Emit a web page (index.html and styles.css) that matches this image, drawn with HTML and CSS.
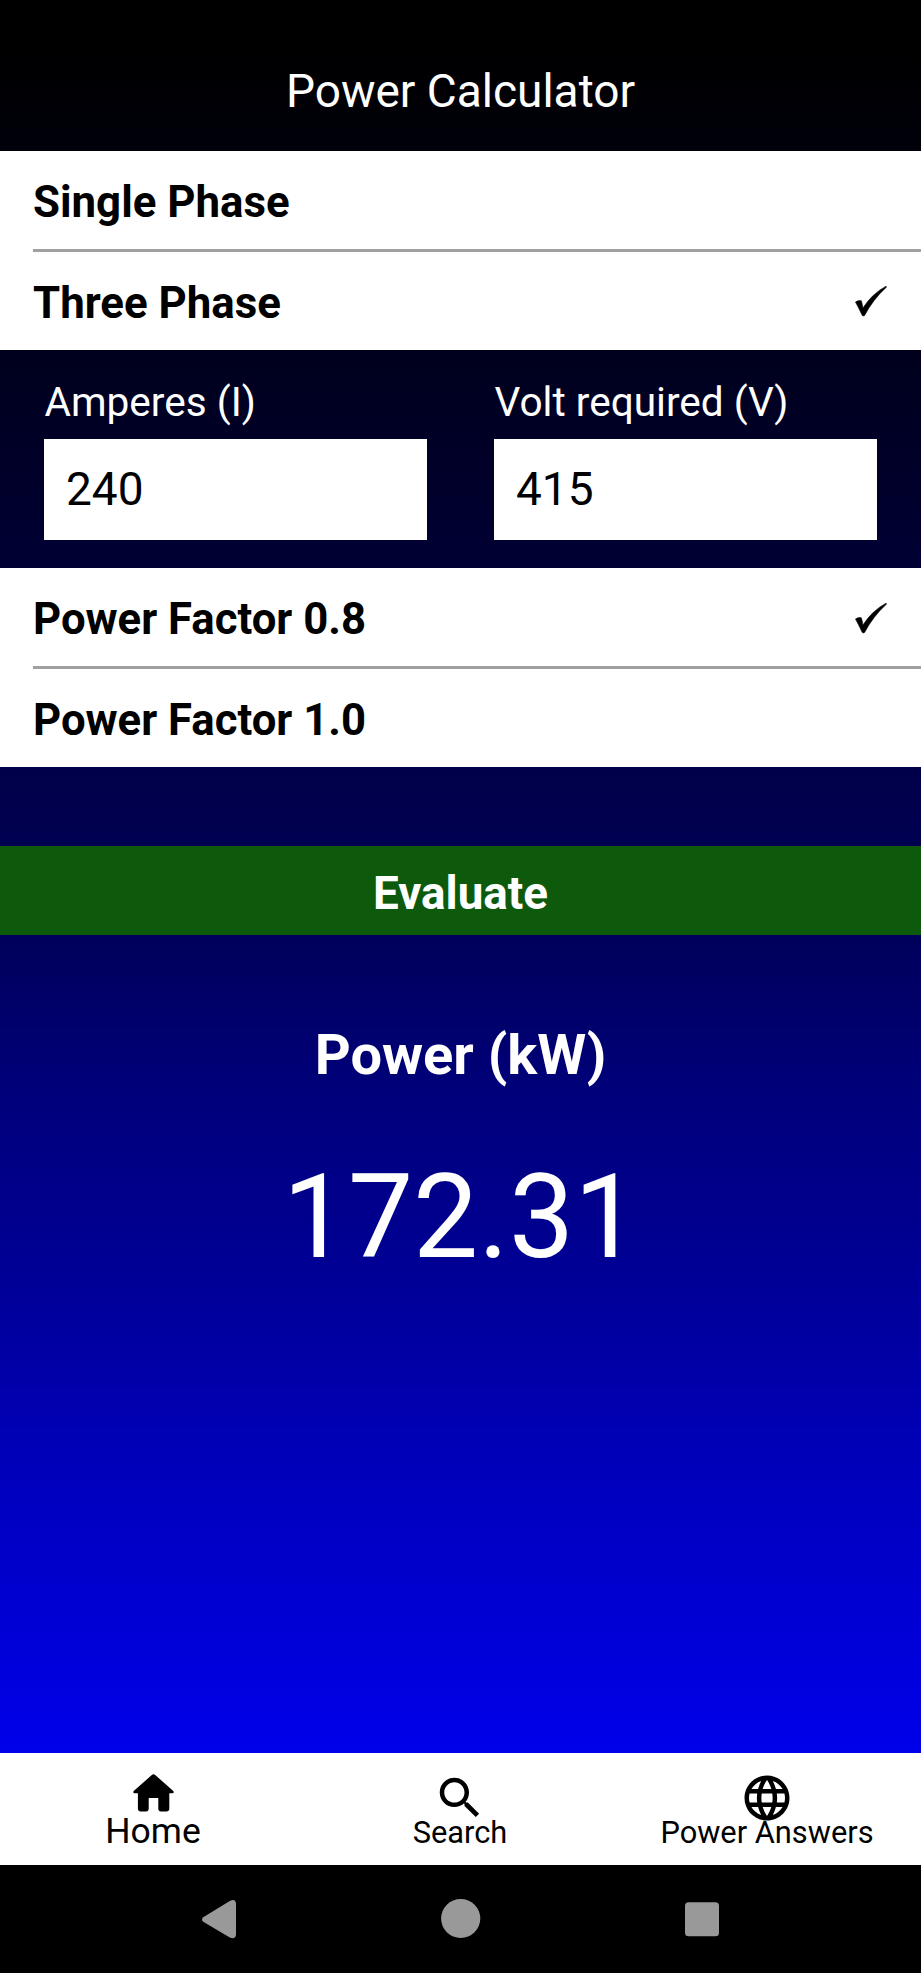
FILE: index.html
```
<!DOCTYPE html>
<html lang="en">
<head>
<meta charset="utf-8">
<title>Power Calculator</title>
<link rel="stylesheet" href="styles.css">
</head>
<body>
<div class="app">
  <header class="header"><h1 class="title">Power Calculator</h1></header>
  <main class="content">
    <ul class="options">
      <li class="option"><span class="option-label">Single Phase</span></li>
      <li class="option"><span class="option-label">Three Phase</span>
        <svg class="check" viewBox="0 0 32 32"><path d="M0 16.5Q3 14.5 6 15.2Q7 18 7.6 22.8Q17 8 31.5 0.2Q32.2 0.5 31.8 1.3Q18 14 9.4 30.4Q8.3 31.3 7 30.5Q4 24 0 16.5Z"/></svg></li>
    </ul>
    <section class="fields">
      <label class="field"><span class="field-label">Amperes (I)</span><input class="field-input" type="text" value="240"></label>
      <label class="field"><span class="field-label">Volt required (V)</span><input class="field-input" type="text" value="415"></label>
    </section>
    <ul class="options">
      <li class="option"><span class="option-label factor">Power Factor 0.8</span>
        <svg class="check" viewBox="0 0 32 32"><path d="M0 16.5Q3 14.5 6 15.2Q7 18 7.6 22.8Q17 8 31.5 0.2Q32.2 0.5 31.8 1.3Q18 14 9.4 30.4Q8.3 31.3 7 30.5Q4 24 0 16.5Z"/></svg></li>
      <li class="option"><span class="option-label factor">Power Factor 1.0</span></li>
    </ul>
    <button class="evaluate" type="button"><span>Evaluate</span></button>
    <section class="result">
      <h2 class="result-title">Power (kW)</h2>
      <p class="result-value">172.31</p>
    </section>
  </main>
  <nav class="tabs">
    <a class="tab tab-home"><svg class="icon-home" viewBox="0 0 41 38"><path d="M18.8 1Q20.5-.5 22.2 1L40.3 17Q41.4 18.9 39.5 19.3H36.3V34.6Q36.3 37.5 33.4 37.5H28Q25.3 37.5 25.3 34.6V24H15.7V34.6Q15.7 37.5 13 37.5H7.8Q4.9 37.5 4.9 34.6V19.3H1.5Q-.4 18.9.7 17Z"/></svg><span>Home</span></a>
    <a class="tab"><svg class="icon" viewBox="0 0 24 24"><path d="M15.5 14h-.79l-.28-.27C15.41 12.59 16 11.11 16 9.5 16 5.91 13.09 3 9.5 3S3 5.91 3 9.5 5.91 16 9.5 16c1.61 0 3.09-.59 4.23-1.57l.27.28v.79l5 4.99L20.49 19l-4.99-5zm-6 0C7.01 14 5 11.99 5 9.5S7.01 5 9.5 5 14 7.01 14 9.5 11.99 14 9.5 14z"/></svg><span>Search</span></a>
    <a class="tab"><svg class="icon" viewBox="0 0 24 24"><path d="M11.99 2C6.47 2 2 6.48 2 12s4.47 10 9.99 10C17.52 22 22 17.52 22 12S17.52 2 11.99 2zm6.93 6h-2.95c-.32-1.25-.78-2.45-1.38-3.56 1.84.63 3.37 1.91 4.33 3.56zM12 4.04c.83 1.2 1.48 2.53 1.91 3.96h-3.82c.43-1.43 1.08-2.76 1.91-3.96zM4.26 14C4.1 13.36 4 12.69 4 12s.1-1.36.26-2h3.38c-.08.66-.14 1.32-.14 2s.06 1.34.14 2H4.26zm.82 2h2.95c.32 1.25.78 2.45 1.38 3.56-1.84-.63-3.37-1.9-4.33-3.56zm2.95-8H5.08c.96-1.66 2.49-2.93 4.33-3.56C8.81 5.55 8.35 6.75 8.03 8zM12 19.96c-.83-1.2-1.48-2.53-1.91-3.96h3.82c-.43 1.43-1.08 2.76-1.91 3.96zM14.34 14H9.66c-.09-.66-.16-1.32-.16-2s.07-1.35.16-2h4.68c.09.65.16 1.32.16 2s-.07 1.34-.16 2zm.25 5.56c.6-1.11 1.06-2.31 1.38-3.56h2.95c-.96 1.65-2.49 2.93-4.33 3.56zM16.36 14c.08-.66.14-1.32.14-2s-.06-1.34-.14-2h3.38c.16.64.26 1.31.26 2s-.1 1.36-.26 2h-3.38z"/></svg><span>Power Answers</span></a>
  </nav>
  <footer class="system-bar">
    <svg class="sys" viewBox="0 0 40 40"><path d="M2.2 18.2 29.2 1.7Q34.4-.3 35 4.5V36Q34.4 40.3 29.2 38.7L2.2 22.8Q-.2 20.5 2.2 18.2Z"/></svg>
    <svg class="sys" viewBox="0 0 40 40"><circle cx="18.7" cy="19.5" r="19.6"/></svg>
    <svg class="sys" viewBox="0 0 40 40"><rect x="3" y="3.2" width="34" height="34" rx="3.5"/></svg>
  </footer>
</div>
</body>
</html>
```
FILE: styles.css
```
* { box-sizing: border-box; margin: 0; padding: 0; }
body { font-family: Roboto, "Liberation Sans", sans-serif; color: #000; }
.app {
  width: 921px; height: 1973px; display: flex; flex-direction: column; overflow: hidden;
  background: linear-gradient(180deg, #000000 40px, #00000a 150px, #00001d 352px, #000034 565px, #00004a 775px, #00005c 940px, #00007c 1100px, #00009a 1300px, #0000b8 1450px, #0000d4 1620px, #0000ea 1752px);
}
.header { height: 151px; padding-top: 30px; display: flex; align-items: center; justify-content: center; }
.title { font-size: 46px; font-weight: 400; color: #fff; }
.content { flex: 1; display: flex; flex-direction: column; }
.options { list-style: none; background: #fff; padding-left: 33px; height: 199px; flex: none; }
.option { height: 101px; padding: 4px 34px 0 0; display: flex; align-items: center; justify-content: space-between; }
.option + .option { height: 98px; padding-top: 3px; }
.option:first-child { border-bottom: 3px solid #a0a0a0; }
.option-label { font-size: 43.8px; font-weight: 700; }
.factor { font-size: 43.7px; }
.check { width: 32px; height: 31px; margin-top: -2px; overflow: visible; stroke: #000; stroke-width: 0.6; }
.fields { height: 218px; padding: 28px 44px 0; display: grid; grid-template-columns: 383px 383px; justify-content: space-between; flex: none; }
.field { display: flex; flex-direction: column; }
.field-label { height: 61px; padding-left: 0.5px; line-height: 48px; font-size: 40.6px; color: #fff; }
.field-input { height: 101px; border: 0; background: #fff; padding: 0 22px 2px; font: 46px Roboto, "Liberation Sans", sans-serif; color: #000; }
.evaluate { margin-top: 79px; height: 89px; flex: none; border: 0; background: #0d5a0d; color: #fff; padding-top: 5px; font: 700 45.8px Roboto, "Liberation Sans", sans-serif; }
.result { padding-top: 85px; text-align: center; color: #fff; }
.result-title { font-size: 56px; line-height: 70px; }
.result-value { font-size: 116px; line-height: 140px; margin-top: 57px; padding-left: 1px; }
.tabs { height: 112px; background: #fff; display: grid; grid-template-columns: repeat(3, 1fr); }
.tab { display: flex; flex-direction: column; align-items: center; padding: 18px 1px 0 0; font-size: 30.8px; line-height: 36px; }
.tab-home { padding-top: 21px; font-size: 35.5px; line-height: 42px; }
.icon { width: 54px; height: 54px; flex: none; margin-bottom: -10px; }
.icon-home { width: 41px; height: 38px; flex: none; margin-bottom: -2px; }
.system-bar { height: 108px; background: #000; display: flex; justify-content: space-between; padding: 34px 199px 0 201px; fill: #999; }
.sys { width: 40px; height: 40px; overflow: visible; }
```
